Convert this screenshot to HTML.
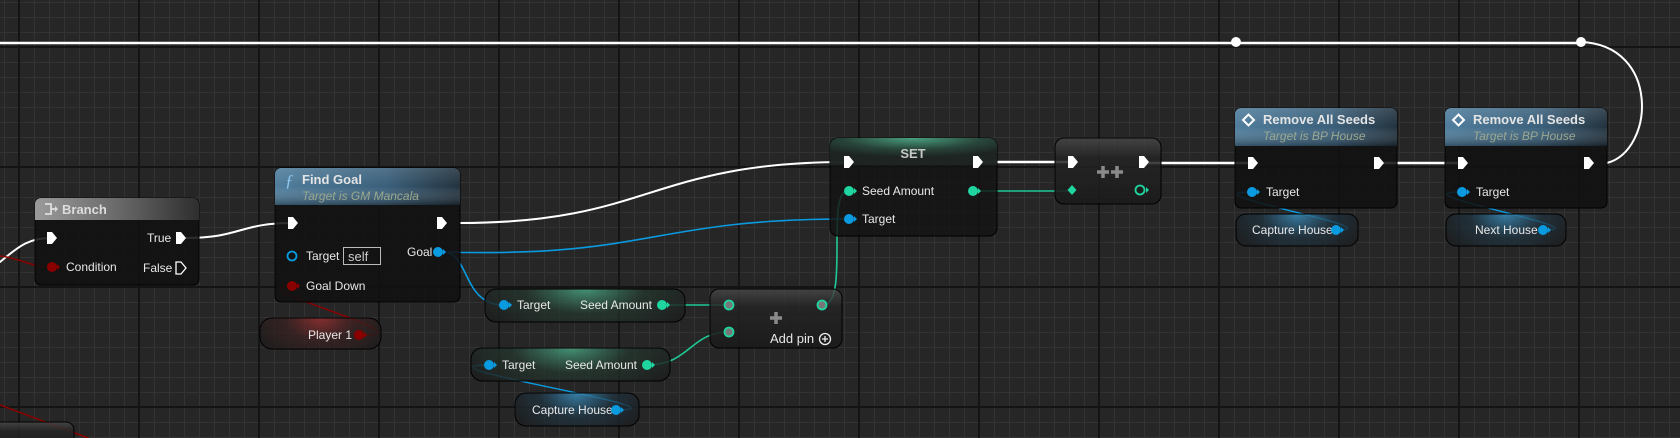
<!DOCTYPE html>
<html><head><meta charset="utf-8"><style>
html,body{margin:0;padding:0;width:1680px;height:438px;overflow:hidden;background:#262626}
#g{position:absolute;left:0;top:0;width:1680px;height:438px;
background-image:
linear-gradient(to right,#141414 2px,transparent 2px),
linear-gradient(to bottom,#141414 2px,transparent 2px),
linear-gradient(to right,#333 1px,transparent 1px),
linear-gradient(to bottom,#333 1px,transparent 1px);
background-size:120px 120px,120px 120px,15px 15px,15px 15px;
background-position:18px 0,0 46px,4px 0,0 2px;}
svg{position:absolute;left:0;top:0}
text{font-family:"Liberation Sans",sans-serif;fill:#e8e8e8;font-size:12px}
.t{font-weight:bold;font-size:13px;fill:#e4e4e4}
.s{font-style:italic;font-size:12px;fill:#9aa890}
</style></head><body><div id="g"></div>
<svg width="1680" height="438" viewBox="0 0 1680 438">
<defs>
<linearGradient id="hb" x1="0" y1="0" x2="1" y2="0"><stop offset="0" stop-color="#4f7d9c"/><stop offset="0.6" stop-color="#3a5f7a"/><stop offset="1" stop-color="#22323e"/></linearGradient>
<linearGradient id="hbv" x1="0" y1="0" x2="0" y2="1"><stop offset="0" stop-color="#fff" stop-opacity="0.12"/><stop offset="0.5" stop-color="#fff" stop-opacity="0"/><stop offset="1" stop-color="#000" stop-opacity="0.35"/></linearGradient>
<linearGradient id="hg" x1="0" y1="0" x2="1" y2="0"><stop offset="0" stop-color="#9a9a9a"/><stop offset="0.5" stop-color="#6a6a6a"/><stop offset="1" stop-color="#2e2e2e"/></linearGradient>
<radialGradient id="hs" cx="0.5" cy="0" r="0.7"><stop offset="0" stop-color="#4fb08c"/><stop offset="0.6" stop-color="#2a4a3e"/><stop offset="1" stop-color="#1e2624"/></radialGradient>
<radialGradient id="vg" cx="0.5" cy="0" r="0.6" gradientTransform="translate(0.5 0) scale(1 2.5) translate(-0.5 0)"><stop offset="0" stop-color="#4aa583" stop-opacity="0.85"/><stop offset="0.5" stop-color="#24382f" stop-opacity="0.7"/><stop offset="1" stop-color="#1c1c1c" stop-opacity="0.9"/></radialGradient>
<radialGradient id="vb" cx="0.5" cy="0" r="0.6" gradientTransform="translate(0.5 0) scale(1 2.5) translate(-0.5 0)"><stop offset="0" stop-color="#3a8fbf" stop-opacity="0.85"/><stop offset="0.5" stop-color="#1f3442" stop-opacity="0.7"/><stop offset="1" stop-color="#1c1c1c" stop-opacity="0.9"/></radialGradient>
<radialGradient id="vr" cx="0.5" cy="0" r="0.6" gradientTransform="translate(0.5 0) scale(1 2.5) translate(-0.5 0)"><stop offset="0" stop-color="#983030" stop-opacity="0.85"/><stop offset="0.5" stop-color="#3a2020" stop-opacity="0.7"/><stop offset="1" stop-color="#1c1c1c" stop-opacity="0.9"/></radialGradient>
<linearGradient id="pg" x1="0" y1="0" x2="0" y2="1"><stop offset="0" stop-color="#4a4a4a" stop-opacity="0.8"/><stop offset="0.3" stop-color="#242424" stop-opacity="0.85"/><stop offset="1" stop-color="#1a1a1a" stop-opacity="0.9"/></linearGradient>
</defs>

<g fill="none" stroke-linecap="round">
<path d="M0,43 H1583" stroke="#fff" stroke-width="2.5"/>
<path d="M1581,42 C1660,45 1655,150 1607,163" stroke="#fff" stroke-width="2"/>
<path d="M0,262 C20,245 30,238 51,238" stroke="#fff" stroke-width="2"/>
<path d="M186,238 C240,238 240,223 292,223" stroke="#fff" stroke-width="2"/>
<path d="M460,223 C650,223 650,162 848,162" stroke="#fff" stroke-width="2"/>
<path d="M977,162 H1072" stroke="#fff" stroke-width="2.5"/>
<path d="M1143,163 H1252" stroke="#fff" stroke-width="2.5"/>
<path d="M1378,163 H1462" stroke="#fff" stroke-width="2.5"/>
<path d="M0,256 C20,258 30,267 52,267" stroke="#8a0000" stroke-width="1.5"/>
<path d="M365,335 C430,335 230,286 292,286" stroke="#8a0000" stroke-width="1.5"/>
<path d="M0,405 L88,438" stroke="#8a0000" stroke-width="1.5"/>
<path d="M443,252 C470,252 462,305 504,305" stroke="#0a9ae0" stroke-width="1.6"/>
<path d="M443,252 C650,258 650,219 848,219" stroke="#0a9ae0" stroke-width="1.6"/>
<path d="M616,410 C700,410 400,365 489,365" stroke="#0a9ae0" stroke-width="1.4"/>
<path d="M1336,230 C1400,230 1180,192 1252,192" stroke="#0a9ae0" stroke-width="1.4"/>
<path d="M1543,230 C1607,230 1390,192 1462,192" stroke="#0a9ae0" stroke-width="1.4"/>
<path d="M973,191 H1072" stroke="#1fc996" stroke-width="1.6"/>
<path d="M662,305 H729" stroke="#1fc996" stroke-width="1.6"/>
<path d="M647,365 C690,365 690,332 729,332" stroke="#1fc996" stroke-width="1.6"/>
<path d="M823,305 C850,305 825,191 848,191" stroke="#1fc996" stroke-width="1.6"/>
</g>
<circle cx="1236" cy="42" r="5" fill="#fff"/>
<circle cx="1581" cy="42" r="5" fill="#fff"/>

<rect x="-10" y="422" width="84" height="30" rx="8" fill="url(#pg)" stroke="#000"/>

<!-- Branch -->
<rect x="35" y="198" width="164" height="87" rx="6" fill="#111" fill-opacity="0.88" stroke="#000"/>
<path d="M41,198 H193 a6,6 0 0 1 6,6 V220 H35 V204 a6,6 0 0 1 6,-6z" fill="url(#hg)"/>
<path d="M45,204 h6 v5 h6 M51,209 v5 h-6" stroke="#ddd" stroke-width="1.8" fill="none"/>
<path d="M55,206 l3,3 l-3,3z" fill="#ddd"/>
<text x="62" y="214" class="t" style="fill:#ddd">Branch</text>
<path d="M47,232 h5 l5,6 l-5,6 h-5z" fill="#fff"/>
<text x="147" y="242">True</text>
<path d="M176,232 h5 l5,6 l-5,6 h-5z" fill="#fff"/>
<circle cx="52" cy="267" r="5" fill="#8a0000"/><path d="M57,264 l3,3 l-3,3z" fill="#8a0000"/>
<text x="66" y="271">Condition</text>
<text x="143" y="272">False</text>
<path d="M176,262 h5 l5,6 l-5,6 h-5z" fill="none" stroke="#fff" stroke-width="1.3"/>

<!-- Find Goal -->
<rect x="275" y="168" width="185" height="134" rx="6" fill="#111" fill-opacity="0.88" stroke="#000"/>
<path d="M281,168 H454 a6,6 0 0 1 6,6 V205 H275 V174 a6,6 0 0 1 6,-6z" fill="url(#hb)"/>
<path d="M281,168 H454 a6,6 0 0 1 6,6 V205 H275 V174 a6,6 0 0 1 6,-6z" fill="url(#hbv)"/>
<text x="285" y="186" style="font-style:italic;font-family:'Liberation Serif',serif;font-size:17px;fill:#8fc8f0">ƒ</text>
<text x="302" y="184" class="t">Find Goal</text>
<text x="302" y="200" class="s">Target is GM Mancala</text>
<path d="M288,217 h5 l5,6 l-5,6 h-5z" fill="#fff"/>
<path d="M437,217 h5 l5,6 l-5,6 h-5z" fill="#fff"/>
<circle cx="292" cy="256" r="4.5" fill="none" stroke="#0a9ae0" stroke-width="1.8"/>
<text x="306" y="260">Target</text>
<rect x="343.5" y="247.5" width="37" height="17" fill="none" stroke="#bbb"/>
<text x="348" y="261" style="font-size:13px;fill:#ccc">self</text>
<text x="407" y="256">Goal</text>
<circle cx="438" cy="252" r="5" fill="#0a9ae0"/><path d="M443,249 l3,3 l-3,3z" fill="#0a9ae0"/>
<circle cx="292" cy="286" r="5" fill="#8a0000"/><path d="M297,283 l3,3 l-3,3z" fill="#8a0000"/>
<text x="306" y="290">Goal Down</text>

<rect x="260" y="318" width="121" height="31" rx="12" fill="url(#vr)" stroke="#000"/>
<text x="308" y="339">Player 1</text>
<circle cx="359" cy="335" r="5" fill="#8a0000"/><path d="M364,332 l3,3 l-3,3z" fill="#8a0000"/>

<!-- SET -->
<rect x="830" y="138" width="167" height="98" rx="8" fill="#141414" fill-opacity="0.82" stroke="#000"/>
<path d="M838,138 H989 a8,8 0 0 1 8,8 V165 H830 V146 a8,8 0 0 1 8,-8z" fill="url(#hs)" opacity="0.9"/>
<text x="913" y="158" class="t" text-anchor="middle" style="fill:#c8c8c8">SET</text>
<path d="M844,156 h5 l5,6 l-5,6 h-5z" fill="#fff"/>
<path d="M973,156 h5 l5,6 l-5,6 h-5z" fill="#fff"/>
<circle cx="849" cy="191" r="5" fill="#1fd6a0"/><path d="M854,188 l3,3 l-3,3z" fill="#1fd6a0"/>
<text x="862" y="195">Seed Amount</text>
<circle cx="973" cy="191" r="5" fill="#1fd6a0"/><path d="M978,188 l3,3 l-3,3z" fill="#1fd6a0"/>
<circle cx="849" cy="219" r="5" fill="#0a9ae0"/><path d="M854,216 l3,3 l-3,3z" fill="#0a9ae0"/>
<text x="862" y="223">Target</text>

<!-- ++ -->
<rect x="1055" y="138" width="106" height="66" rx="9" fill="url(#pg)" stroke="#000"/>
<path d="M1068,156 h5 l5,6 l-5,6 h-5z" fill="#fff"/>
<path d="M1139,156 h5 l5,6 l-5,6 h-5z" fill="#fff"/>
<path d="M1097,172 h12 M1103,166 v12 M1111,172 h12 M1117,166 v12" stroke="#8a8a8a" stroke-width="3.5"/>
<path d="M1072,185 l4.5,5 l-4.5,5 l-4.5,-5z" fill="#1fd6a0"/>
<circle cx="1140" cy="190" r="4.5" fill="none" stroke="#1fd6a0" stroke-width="1.8"/><path d="M1146,187 l3,3 l-3,3z" fill="#1fd6a0"/>

<!-- Remove All Seeds 1 -->
<rect x="1235" y="108" width="162" height="100" rx="6" fill="#111" fill-opacity="0.88" stroke="#000"/>
<path d="M1241,108 H1391 a6,6 0 0 1 6,6 V146 H1235 V114 a6,6 0 0 1 6,-6z" fill="url(#hb)"/>
<path d="M1241,108 H1391 a6,6 0 0 1 6,6 V146 H1235 V114 a6,6 0 0 1 6,-6z" fill="url(#hbv)"/>
<path d="M1243,120 l5.5,-5.5 l5.5,5.5 l-5.5,5.5z" fill="none" stroke="#fff" stroke-width="2"/>
<text x="1263" y="124" class="t">Remove All Seeds</text>
<text x="1263" y="140" class="s">Target is BP House</text>
<path d="M1248,157 h5 l5,6 l-5,6 h-5z" fill="#fff"/>
<path d="M1374,157 h5 l5,6 l-5,6 h-5z" fill="#fff"/>
<circle cx="1252" cy="192" r="5" fill="#0a9ae0"/><path d="M1257,189 l3,3 l-3,3z" fill="#0a9ae0"/>
<text x="1266" y="196">Target</text>
<rect x="1236" y="214" width="122" height="32" rx="10" fill="url(#vb)" stroke="#000"/>
<text x="1252" y="234">Capture House</text>
<circle cx="1336" cy="230" r="5" fill="#0a9ae0"/><path d="M1341,227 l3,3 l-3,3z" fill="#0a9ae0"/>

<!-- Remove All Seeds 2 -->
<rect x="1445" y="108" width="162" height="100" rx="6" fill="#111" fill-opacity="0.88" stroke="#000"/>
<path d="M1451,108 H1601 a6,6 0 0 1 6,6 V146 H1445 V114 a6,6 0 0 1 6,-6z" fill="url(#hb)"/>
<path d="M1451,108 H1601 a6,6 0 0 1 6,6 V146 H1445 V114 a6,6 0 0 1 6,-6z" fill="url(#hbv)"/>
<path d="M1453,120 l5.5,-5.5 l5.5,5.5 l-5.5,5.5z" fill="none" stroke="#fff" stroke-width="2"/>
<text x="1473" y="124" class="t">Remove All Seeds</text>
<text x="1473" y="140" class="s">Target is BP House</text>
<path d="M1458,157 h5 l5,6 l-5,6 h-5z" fill="#fff"/>
<path d="M1584,157 h5 l5,6 l-5,6 h-5z" fill="#fff"/>
<circle cx="1462" cy="192" r="5" fill="#0a9ae0"/><path d="M1467,189 l3,3 l-3,3z" fill="#0a9ae0"/>
<text x="1476" y="196">Target</text>
<rect x="1446" y="214" width="120" height="32" rx="10" fill="url(#vb)" stroke="#000"/>
<text x="1475" y="234">Next House</text>
<circle cx="1543" cy="230" r="5" fill="#0a9ae0"/><path d="M1548,227 l3,3 l-3,3z" fill="#0a9ae0"/>

<!-- Var node 1 -->
<rect x="485" y="289" width="200" height="33" rx="11" fill="url(#vg)" stroke="#000"/>
<circle cx="504" cy="305" r="5" fill="#0a9ae0"/><path d="M509,302 l3,3 l-3,3z" fill="#0a9ae0"/>
<text x="517" y="309">Target</text>
<text x="652" y="309" text-anchor="end">Seed Amount</text>
<circle cx="662" cy="305" r="5" fill="#1fd6a0"/><path d="M667,302 l3,3 l-3,3z" fill="#1fd6a0"/>

<!-- Var node 2 -->
<rect x="471" y="348" width="199" height="33" rx="11" fill="url(#vg)" stroke="#000"/>
<circle cx="489" cy="365" r="5" fill="#0a9ae0"/><path d="M494,362 l3,3 l-3,3z" fill="#0a9ae0"/>
<text x="502" y="369">Target</text>
<text x="637" y="369" text-anchor="end">Seed Amount</text>
<circle cx="647" cy="365" r="5" fill="#1fd6a0"/><path d="M652,362 l3,3 l-3,3z" fill="#1fd6a0"/>

<rect x="515" y="393" width="124" height="33" rx="11" fill="url(#vb)" stroke="#000"/>
<text x="532" y="414">Capture House</text>
<circle cx="616" cy="410" r="5" fill="#0a9ae0"/><path d="M621,407 l3,3 l-3,3z" fill="#0a9ae0"/>

<!-- Add node -->
<rect x="710" y="289" width="132" height="59" rx="9" fill="url(#pg)" stroke="#000"/>
<circle cx="729" cy="305" r="4.5" fill="#777" stroke="#1fd6a0" stroke-width="1.8"/>
<circle cx="729" cy="332" r="4.5" fill="#777" stroke="#1fd6a0" stroke-width="1.8"/>
<circle cx="822" cy="305" r="4.5" fill="#777" stroke="#1fd6a0" stroke-width="1.8"/>
<path d="M776,312 v12 M770,318 h12" stroke="#8a8a8a" stroke-width="3.5"/>
<text x="770" y="343" style="font-size:13px">Add pin</text>
<circle cx="825" cy="339" r="5.5" fill="none" stroke="#eee" stroke-width="1.3"/>
<path d="M822,339 h6 M825,336 v6" stroke="#eee" stroke-width="1.3"/>
</svg>
</body></html>
